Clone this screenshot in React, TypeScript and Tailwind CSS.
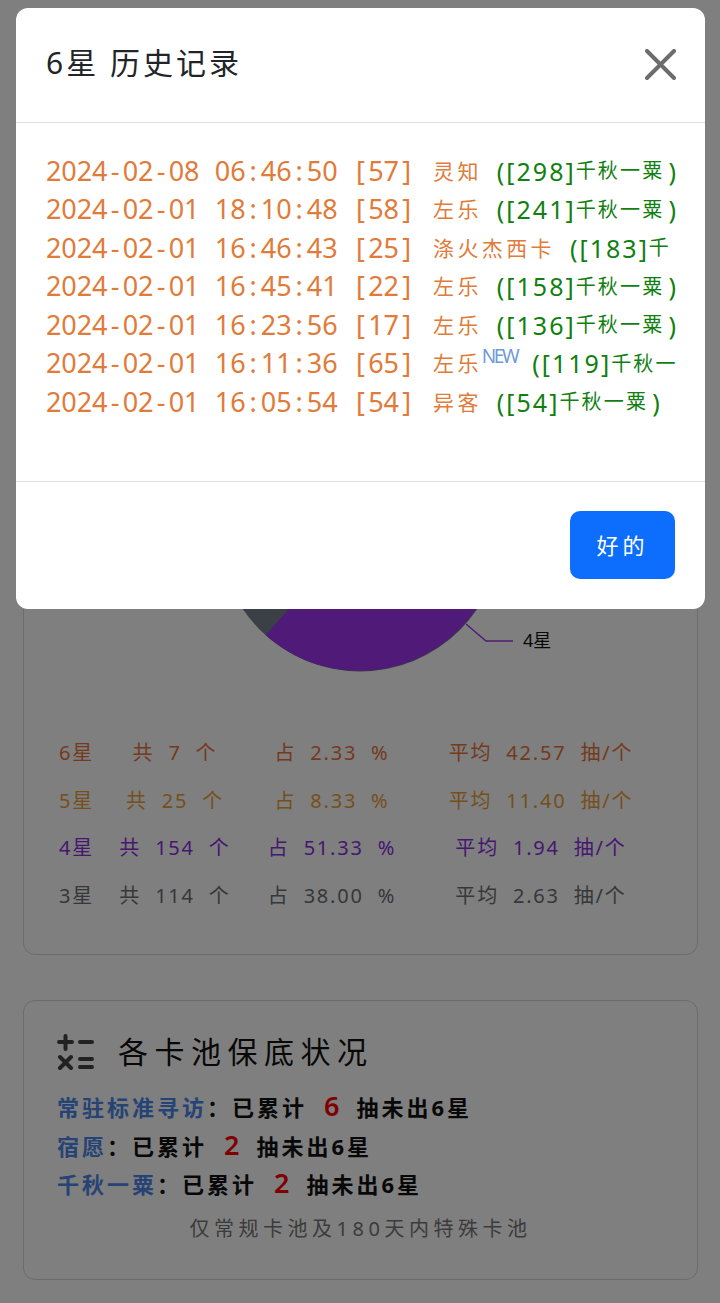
const cjk = "font-['Noto_Sans','Noto_Sans_CJK_SC',sans-serif]";

const history = [
  { time: '2024-02-08 06:46:50 [57]', name: '灵知', pool: '([298]', poolName: '千秋一粟', closed: true },
  { time: '2024-02-01 18:10:48 [58]', name: '左乐', pool: '([241]', poolName: '千秋一粟', closed: true },
  { time: '2024-02-01 16:46:43 [25]', name: '涤火杰西卡', pool: '([183]', poolName: '千' },
  { time: '2024-02-01 16:45:41 [22]', name: '左乐', pool: '([158]', poolName: '千秋一粟', closed: true },
  { time: '2024-02-01 16:23:56 [17]', name: '左乐', pool: '([136]', poolName: '千秋一粟', closed: true },
  { time: '2024-02-01 16:11:36 [65]', name: '左乐', isNew: true, pool: '([119]', poolName: '千秋一' },
  { time: '2024-02-01 16:05:54 [54]', name: '异客', pool: '([54]', poolName: '千秋一粟', closed: true },
];

const stats = [
  { star: '6星', total: '共 7 个', share: '占 2.33 %', avg: '平均 42.57 抽/个', color: 'text-[#e8743c]' },
  { star: '5星', total: '共 25 个', share: '占 8.33 %', avg: '平均 11.40 抽/个', color: 'text-[#eaa03c]' },
  { star: '4星', total: '共 154 个', share: '占 51.33 %', avg: '平均 1.94 抽/个', color: 'text-[#8b30e0]' },
  { star: '3星', total: '共 114 个', share: '占 38.00 %', avg: '平均 2.63 抽/个', color: 'text-[#6b6f74]' },
];

const pools = [
  { name: '常驻标准寻访', count: 6 },
  { name: '宿愿', count: 2 },
  { name: '千秋一粟', count: 2 },
];

function PieChart() {
  return (
    <svg width="675" height="300" viewBox="0 0 675 300" className="block">
      <circle cx="336" cy="153" r="141.4" fill="#74808a" />
      <path d="M336 153 L241.4 258.1 A141.4 141.4 0 1 0 421.5 40.3 Z" fill="#a035f0" />
      <path d="M442 247 L462 264 L489 264" fill="none" stroke="#a035f0" strokeWidth="1.5" />
    </svg>
  );
}

function CalcIcon() {
  return (
    <svg width="37" height="36" viewBox="0 0 37 36" className="shrink-0" stroke="#444" strokeWidth="4" strokeLinecap="round" fill="none">
      <path d="M8.5 2 V15 M2 8 H15" />
      <path d="M23 8 H35" />
      <path d="M3 23 L14 34 M14 23 L3 34" />
      <path d="M23 25 H35 M23 33 H35" />
    </svg>
  );
}

// the timestamps sit on a fixed pitch in the screenshot
function MonoText({ text }: { text: string }) {
  return (
    <>
      {text.split('').map((ch, i) => (
        <span key={i} className="inline-block w-[15.35px] text-center">
          {ch === ' ' ? '\u00a0' : ch}
        </span>
      ))}
    </>
  );
}

function HistoryModal() {
  return (
    <div className="absolute left-4 top-2 w-[689px] overflow-hidden rounded-[12px] bg-white">
      <div className="flex h-[115px] items-center justify-between border-b border-[#dee2e6] pl-[30px] pr-[29px]">
        <h2 className="-mt-[5px] text-[30px] leading-none tracking-[3px] text-[#212529]">6星 历史记录</h2>
        <svg width="31" height="31" viewBox="0 0 31 31" stroke="#6c6c6c" strokeWidth="4" strokeLinecap="round" className="-mt-[2px]">
          <path d="M2 2 L29 29 M29 2 L2 29" />
        </svg>
      </div>
      <div className="h-[359px] border-b border-[#dee2e6] pl-[30px] pt-[29px]">
        {history.map((row) => (
          <div key={row.time} className="flex h-[38.5px] items-center whitespace-nowrap text-[27px] leading-none text-[#e07b39]">
            <span className="-mt-[2px] w-[387px] shrink-0 whitespace-pre">
              <MonoText text={row.time} />
            </span>
            <span className="text-[21px] tracking-[3.4px]">{row.name}</span>
            {row.isNew && (
              <span className="-mt-[16px] text-[19px] leading-[20px] tracking-[-2.4px] text-[#6f9bd8]">NEW</span>
            )}
            <span className="ml-[15px] text-[25px] tracking-[2px] text-[#108010]">{row.pool}</span>
            <span className="text-[20px] tracking-[2.2px] text-[#108010]">{row.poolName}</span>
            {row.closed && <span className="ml-[4px] text-[25px] text-[#108010]">)</span>}
          </div>
        ))}
      </div>
      <div className="flex h-[127px] items-start justify-end pr-[30px] pt-[29px]">
        <button className="flex h-[68px] w-[105px] items-center justify-center rounded-[10px] bg-[#0d6efd] text-[22px] tracking-[4px] text-white">
          好的
        </button>
      </div>
    </div>
  );
}

export default function App() {
  return (
    <div className={`relative h-[1303px] overflow-hidden bg-white ${cjk}`}>
      <div className="pl-[23px] pr-[22px] pt-[300px]">
        <div className="relative h-[655px] rounded-[12px] border border-[#d8d8d8] pt-[76px]">
          <PieChart />
          <span className="absolute left-[499px] top-[330px] text-[18px] leading-none text-[#111]">4星</span>
          <div className="mt-[52px] ml-[35px] grid grid-cols-[34px_164px_150px_268px] text-[20px] leading-[47.5px] tracking-[1.8px]">
            {stats.map((s) => (
              <div key={s.star} className={`contents ${s.color}`}>
                <span className="whitespace-nowrap">{s.star}</span>
                <span className="text-center whitespace-pre">{s.total.replaceAll(' ', '  ')}</span>
                <span className="text-center whitespace-pre">{s.share.replaceAll(' ', '  ')}</span>
                <span className="text-center whitespace-pre">{s.avg.replaceAll(' ', '  ')}</span>
              </div>
            ))}
          </div>
        </div>

        <div className="mt-[45px] h-[280px] rounded-[12px] border border-[#d8d8d8] pl-[33px] pt-[33px]">
          <div className="flex items-center gap-[24px]">
            <CalcIcon />
            <h3 className="text-[30px] leading-none tracking-[6.5px] text-[#111]">各卡池保底状况</h3>
          </div>
          <div className="mt-[17px]">
            {pools.map((p) => (
              <p key={p.name} className="h-[38.5px] text-[22px] leading-[38.5px] font-bold tracking-[3px] text-[#111]">
                <span className="text-[#4a86e8]">{p.name}</span>：已累计
                <span className="mx-[17px] text-[27px] font-semibold tracking-normal text-[#ff0000]">{p.count}</span>
                抽未出6星
              </p>
            ))}
          </div>
          <p className="mt-[11px] -ml-[33px] text-center text-[20px] tracking-[4.5px] text-[#777]">仅常规卡池及180天内特殊卡池</p>
        </div>
      </div>

      <div className="absolute inset-0 bg-black/50" />
      <HistoryModal />
    </div>
  );
}
